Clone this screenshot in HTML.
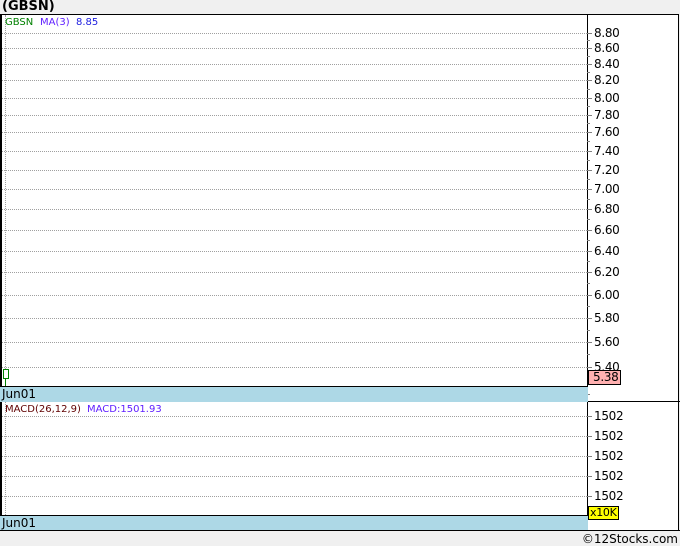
<!DOCTYPE html>
<html><head><style>
body{margin:0;width:680px;height:546px;background:#f0f0f0;position:relative;overflow:hidden;font-family:"DejaVu Sans",Verdana,sans-serif;}
.a{position:absolute}
.g{position:absolute;left:2px;width:585px;border-top:1px dotted #a0a0a0;height:0}
.t{position:absolute;left:587px;width:5px;border-top:1px solid #808080;height:0}
.mt{position:absolute;left:587px;width:3px;border-top:1px solid #808080;height:0}
.l{position:absolute;left:594px;font-size:12px;color:#000;line-height:12px;letter-spacing:-0.3px}
</style></head><body>
<div class="a" style="left:2px;top:0;font-size:13px;font-weight:bold;line-height:14px">(GBSN)</div>
<div class="a" style="left:0;top:14px;width:679px;height:517px;background:#fff;border-top:1px solid #000;border-right:1px solid #000;box-sizing:border-box"></div>
<div class="a" style="left:0;top:14px;width:2px;height:517px;background:#000"></div>
<div class="a" style="left:587px;top:14px;width:1px;height:517px;background:#000"></div>
<div class="a" style="left:0;top:401px;width:680px;height:1px;background:#000"></div>
<div class="a" style="left:5px;top:15px;height:500px;border-left:1px dotted #a0a0a0"></div>
<div class="a" style="left:5px;top:17px;font-size:10px;color:#008000">GBSN</div>
<div class="a" style="left:40px;top:17px;font-size:10px;color:#6020ff">MA(3)&nbsp; <span style="color:#2020e0">8.85</span></div>

<div class="g" style="top:33px"></div><div class="t" style="top:33px"></div><div class="l" style="top:27px">8.80</div>
<div class="g" style="top:48px"></div><div class="t" style="top:48px"></div><div class="l" style="top:42px">8.60</div>
<div class="g" style="top:64px"></div><div class="t" style="top:64px"></div><div class="l" style="top:58px">8.40</div>
<div class="g" style="top:80px"></div><div class="t" style="top:80px"></div><div class="l" style="top:74px">8.20</div>
<div class="g" style="top:98px"></div><div class="t" style="top:98px"></div><div class="l" style="top:92px">8.00</div>
<div class="g" style="top:115px"></div><div class="t" style="top:115px"></div><div class="l" style="top:109px">7.80</div>
<div class="g" style="top:132px"></div><div class="t" style="top:132px"></div><div class="l" style="top:126px">7.60</div>
<div class="g" style="top:151px"></div><div class="t" style="top:151px"></div><div class="l" style="top:145px">7.40</div>
<div class="g" style="top:170px"></div><div class="t" style="top:170px"></div><div class="l" style="top:164px">7.20</div>
<div class="g" style="top:189px"></div><div class="t" style="top:189px"></div><div class="l" style="top:183px">7.00</div>
<div class="g" style="top:209px"></div><div class="t" style="top:209px"></div><div class="l" style="top:203px">6.80</div>
<div class="g" style="top:230px"></div><div class="t" style="top:230px"></div><div class="l" style="top:224px">6.60</div>
<div class="g" style="top:251px"></div><div class="t" style="top:251px"></div><div class="l" style="top:245px">6.40</div>
<div class="g" style="top:272px"></div><div class="t" style="top:272px"></div><div class="l" style="top:266px">6.20</div>
<div class="g" style="top:295px"></div><div class="t" style="top:295px"></div><div class="l" style="top:289px">6.00</div>
<div class="g" style="top:318px"></div><div class="t" style="top:318px"></div><div class="l" style="top:312px">5.80</div>
<div class="g" style="top:342px"></div><div class="t" style="top:342px"></div><div class="l" style="top:336px">5.60</div>
<div class="g" style="top:367px"></div><div class="t" style="top:367px"></div><div class="l" style="top:361px">5.40</div>
<div class="mt" style="top:40px"></div><div class="mt" style="top:56px"></div><div class="mt" style="top:72px"></div><div class="mt" style="top:89px"></div><div class="mt" style="top:106px"></div><div class="mt" style="top:123px"></div><div class="mt" style="top:141px"></div><div class="mt" style="top:160px"></div><div class="mt" style="top:179px"></div><div class="mt" style="top:199px"></div><div class="mt" style="top:219px"></div><div class="mt" style="top:240px"></div><div class="mt" style="top:261px"></div><div class="mt" style="top:283px"></div><div class="mt" style="top:306px"></div><div class="mt" style="top:330px"></div><div class="mt" style="top:354px"></div><div class="mt" style="top:394px"></div>
<div class="a" style="left:588px;top:370px;width:33px;height:15px;background:#ffb0b0;border:1px solid #000;box-sizing:border-box;font-size:12px;line-height:13px;padding-left:4px;letter-spacing:-0.3px">5.38</div>
<div class="a" style="left:3px;top:369px;width:6px;height:10px;border:1px solid #008000;box-sizing:border-box;background:#fff"></div>
<div class="a" style="left:5px;top:379px;width:1px;height:7px;background:#008000"></div>
<div class="a" style="left:0;top:386px;width:588px;height:16px;background:#add8e6;border-top:1px solid #000;box-sizing:border-box;font-size:12px;line-height:15px;padding-left:2px">Jun01</div>

<div class="a" style="left:5px;top:404px;font-size:10px;color:#600000">MACD(26,12,9)</div>
<div class="a" style="left:87px;top:404px;font-size:10px;color:#6020ff">MACD:1501.93</div>
<div class="g" style="top:416px"></div><div class="t" style="top:416px"></div><div class="l" style="top:410px">1502</div>
<div class="g" style="top:436px"></div><div class="t" style="top:436px"></div><div class="l" style="top:430px">1502</div>
<div class="g" style="top:456px"></div><div class="t" style="top:456px"></div><div class="l" style="top:450px">1502</div>
<div class="g" style="top:476px"></div><div class="t" style="top:476px"></div><div class="l" style="top:470px">1502</div>
<div class="g" style="top:496px"></div><div class="t" style="top:496px"></div><div class="l" style="top:490px">1502</div>
<div class="a" style="left:588px;top:506px;width:31px;height:14px;background:#ffff00;border:1px solid #000;box-sizing:border-box;font-size:11px;line-height:12px;padding-left:1px;letter-spacing:-0.3px;white-space:nowrap">x10K</div>
<div class="a" style="left:0;top:515px;width:588px;height:16px;background:#add8e6;border-top:1px solid #000;border-bottom:1px solid #000;box-sizing:border-box;font-size:12px;line-height:14px;padding-left:2px">Jun01</div>
<div class="a" style="left:0;top:530px;width:680px;height:1px;background:#000"></div>
<div class="a" style="right:2px;top:532px;font-size:12px;line-height:14px">©12Stocks.com</div>
</body></html>
